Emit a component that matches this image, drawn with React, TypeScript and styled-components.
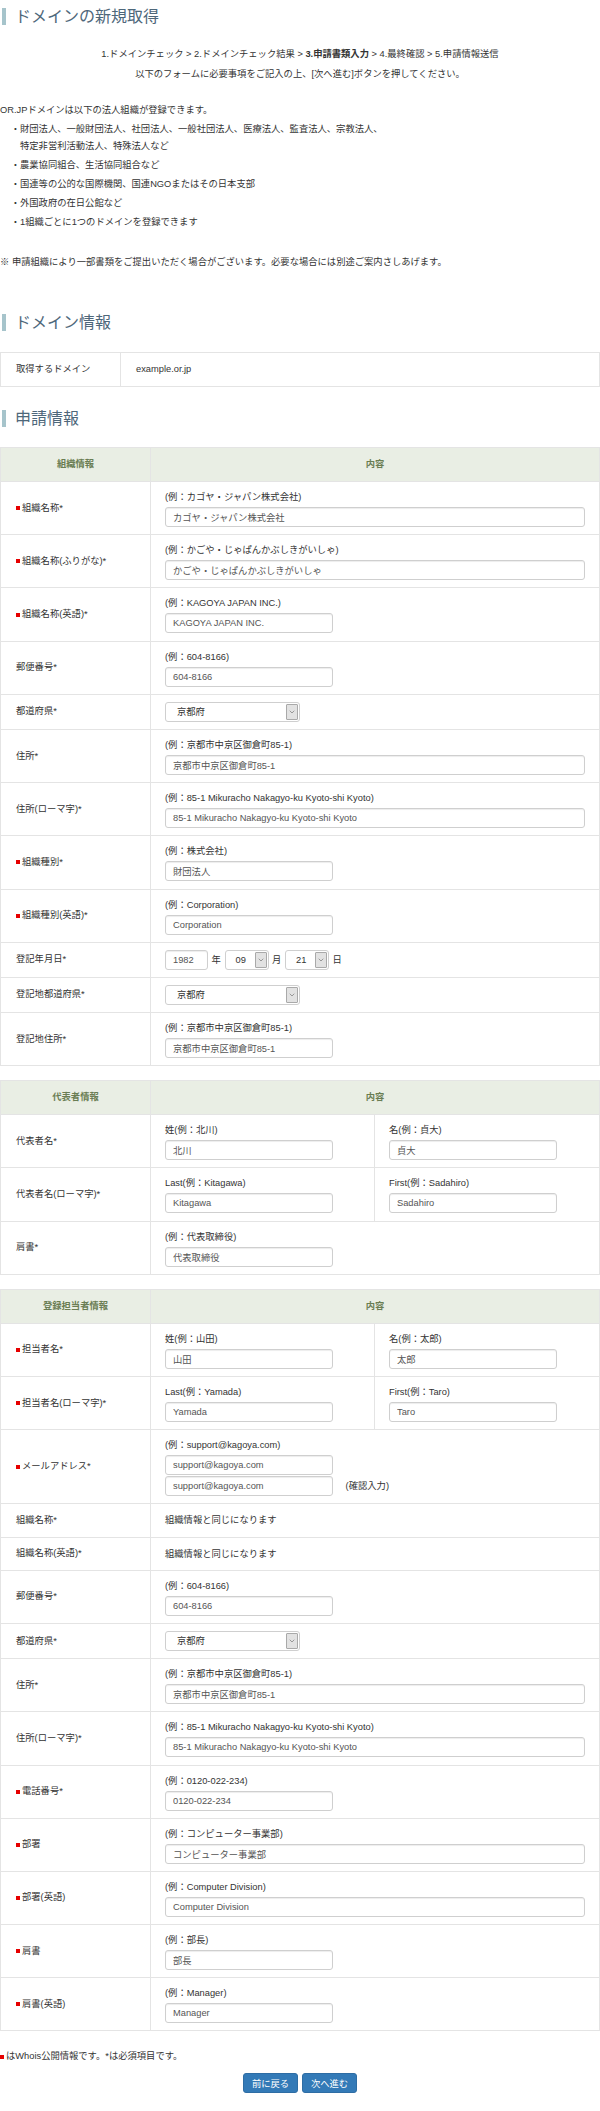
import React from 'react';
import styled, { createGlobalStyle } from 'styled-components';
import { ChevronDown } from 'lucide-react';

const GlobalStyle = createGlobalStyle`
  body {
    margin: 0;
    background: #fff;
    color: #333;
    font-family: "Liberation Sans", "Noto Sans CJK JP", sans-serif;
    font-size: 9.3px;
  }
`;

const Page = styled.div`
  width: 600px;
  padding-bottom: 20px;
`;

const Heading = styled.h2<{ $top: number }>`
  margin: ${p => p.$top}px 0 0 2px;
  padding-left: 9px;
  border-left: 4px solid #a6c4cb;
  font-size: 16px;
  font-weight: normal;
  line-height: 17px;
  color: #4e677a;
`;

const Steps = styled.div`
  margin-top: 19px;
  text-align: center;
  line-height: 20px;

  b {
    font-weight: bold;
  }
`;

const Intro = styled.p`
  margin: 18px 0 0;
  line-height: 17px;
`;

const OrgList = styled.ul`
  list-style: none;
  margin: 0;
  padding: 0 0 0 20px;
`;

const OrgItem = styled.li`
  margin-top: 2px;
  line-height: 17px;
  text-indent: -1em;
`;

const Note = styled.p`
  margin: 23px 0 0;
  line-height: 17px;
`;

const FormTable = styled.table<{ $top: number }>`
  width: 100%;
  margin-top: ${p => p.$top}px;
  border-collapse: collapse;
  table-layout: fixed;
  border: 1px solid #e4e4e4;
`;

const Col = styled.col<{ $width?: number }>`
  width: ${p => (p.$width ? `${p.$width}px` : 'auto')};
`;

const HeadCell = styled.th`
  padding: 8px;
  border: 1px solid #e4e4e4;
  background: #e9eee4;
  color: #6a7d53;
  font-weight: bold;
  line-height: 17px;
  text-align: center;
`;

const LabelCell = styled.td`
  padding: 7px 14px 7px 15px;
  border: 1px solid #e4e4e4;
  line-height: 17px;
  vertical-align: middle;
`;

const FieldCell = styled.td`
  padding: 7px 14px 7.2px;
  border: 1px solid #e4e4e4;
  line-height: 18px;
  vertical-align: middle;
`;

const PlainCell = styled.td`
  padding: 8px 15px;
  border: 1px solid #e4e4e4;
  line-height: 17px;
`;

const Mark = styled.span`
  display: inline-block;
  width: 4px;
  height: 4px;
  margin-right: 2px;
  background: #e60000;
  vertical-align: middle;
`;

const Hint = styled.div`
  line-height: 16px;
  margin-bottom: 2px;
`;

const TextInput = styled.input<{ $width: string }>`
  display: block;
  box-sizing: border-box;
  width: ${p => p.$width};
  height: 20px;
  margin: 0;
  padding: 0 7px;
  border: 1px solid #cfcfcf;
  border-radius: 3px;
  box-shadow: inset 0 1px 1px rgba(0, 0, 0, 0.075);
  background: #fff;
  color: #555;
  font: inherit;
  outline: none;
`;

const SelectBox = styled.div<{ $width: number }>`
  display: flex;
  align-items: stretch;
  box-sizing: border-box;
  width: ${p => p.$width}px;
  height: 20px;
  border: 1px solid #cfcfcf;
  border-radius: 3px;
  background: #fff;
  color: #333;
`;

const SelectText = styled.span<{ $pad: number }>`
  flex: 1;
  padding-left: ${p => p.$pad}px;
  line-height: 18px;
`;

const SelectArrow = styled.span`
  display: flex;
  align-items: center;
  justify-content: center;
  width: 10px;
  margin: 1px;
  border: 1px solid #a9a9a9;
  border-radius: 1px;
  background: #e2e2e2;
  color: #555;
`;

const InlineRow = styled.div`
  display: flex;
  align-items: center;
  gap: 3.6px;
`;

const Stack = styled.div`
  display: flex;
  flex-direction: column;
  gap: 1px;
`;

const Confirm = styled.span`
  margin-left: 9px;
`;

const Footnote = styled.p`
  margin: 17px 0 0;
  line-height: 17px;
`;

const Buttons = styled.div`
  display: flex;
  justify-content: center;
  gap: 4px;
  margin-top: 8px;
`;

const Button = styled.button`
  width: 55px;
  height: 20px;
  padding: 0;
  border: 1px solid #2e6da4;
  border-radius: 3px;
  background: #337ab7;
  color: #fff;
  font: inherit;
  cursor: pointer;
`;

const SHORT = '168px';

const Label = ({ text, marked }: { text: string; marked?: boolean }) => (
  <LabelCell>
    {marked && <Mark />}
    {text}
  </LabelCell>
);

const Select = ({ value, width = 135, pad = 11 }: { value: string; width?: number; pad?: number }) => (
  <SelectBox $width={width}>
    <SelectText $pad={pad}>{value}</SelectText>
    <SelectArrow>
      <ChevronDown size={8} strokeWidth={1.6} />
    </SelectArrow>
  </SelectBox>
);

type InputRowProps = { label: string; marked?: boolean; hint: string; value: string; wide?: boolean };

const InputRow = ({ label, marked, hint, value, wide }: InputRowProps) => (
  <tr>
    <Label text={label} marked={marked} />
    <FieldCell colSpan={2}>
      <Hint>{hint}</Hint>
      <TextInput $width={wide ? '100%' : SHORT} defaultValue={value} />
    </FieldCell>
  </tr>
);

const SelectRow = ({ label }: { label: string }) => (
  <tr>
    <Label text={label} />
    <FieldCell colSpan={2}>
      <Select value="京都府" />
    </FieldCell>
  </tr>
);

const TextRow = ({ label, text }: { label: string; text: string }) => (
  <tr>
    <Label text={label} />
    <FieldCell colSpan={2}>{text}</FieldCell>
  </tr>
);

type Half = { hint: string; value: string };

const PairRow = ({ label, marked, left, right }: { label: string; marked?: boolean; left: Half; right: Half }) => (
  <tr>
    <Label text={label} marked={marked} />
    <FieldCell>
      <Hint>{left.hint}</Hint>
      <TextInput $width={SHORT} defaultValue={left.value} />
    </FieldCell>
    <FieldCell>
      <Hint>{right.hint}</Hint>
      <TextInput $width={SHORT} defaultValue={right.value} />
    </FieldCell>
  </tr>
);

const Section = ({ title, top, children }: { title: string; top: number; children: React.ReactNode }) => (
  <FormTable $top={top}>
    <colgroup>
      <Col $width={150} />
      <Col $width={224} />
      <Col />
    </colgroup>
    <tbody>
      <tr>
        <HeadCell>{title}</HeadCell>
        <HeadCell colSpan={2}>内容</HeadCell>
      </tr>
      {children}
    </tbody>
  </FormTable>
);

const App = () => (
  <Page>
    <GlobalStyle />
    <Heading $top={8}>ドメインの新規取得</Heading>

    <Steps>
      1.ドメインチェック &gt; 2.ドメインチェック結果 &gt; <b>3.申請書類入力</b> &gt; 4.最終確認 &gt; 5.申請情報送信
      <br />
      以下のフォームに必要事項をご記入の上、[次へ進む]ボタンを押してください。
    </Steps>

    <Intro>OR.JPドメインは以下の法人組織が登録できます。</Intro>
    <OrgList>
      <OrgItem>
        ・財団法人、一般財団法人、社団法人、一般社団法人、医療法人、監査法人、宗教法人、
        <br />
        特定非営利活動法人、特殊法人など
      </OrgItem>
      <OrgItem>・農業協同組合、生活協同組合など</OrgItem>
      <OrgItem>・国連等の公的な国際機関、国連NGOまたはその日本支部</OrgItem>
      <OrgItem>・外国政府の在日公館など</OrgItem>
      <OrgItem>・1組織ごとに1つのドメインを登録できます</OrgItem>
    </OrgList>
    <Note>※ 申請組織により一部書類をご提出いただく場合がございます。必要な場合には別途ご案内さしあげます。</Note>

    <Heading $top={43}>ドメイン情報</Heading>
    <FormTable $top={21}>
      <colgroup>
        <Col $width={120} />
        <Col />
      </colgroup>
      <tbody>
        <tr>
          <PlainCell>取得するドメイン</PlainCell>
          <PlainCell>example.or.jp</PlainCell>
        </tr>
      </tbody>
    </FormTable>

    <Heading $top={23}>申請情報</Heading>
    <Section title="組織情報" top={20}>
      <InputRow label="組織名称*" marked hint="(例：カゴヤ・ジャパン株式会社)" value="カゴヤ・ジャパン株式会社" wide />
      <InputRow label="組織名称(ふりがな)*" marked hint="(例：かごや・じゃぱんかぶしきがいしゃ)" value="かごや・じゃぱんかぶしきがいしゃ" wide />
      <InputRow label="組織名称(英語)*" marked hint="(例：KAGOYA JAPAN INC.)" value="KAGOYA JAPAN INC." />
      <InputRow label="郵便番号*" hint="(例：604-8166)" value="604-8166" />
      <SelectRow label="都道府県*" />
      <InputRow label="住所*" hint="(例：京都市中京区御倉町85-1)" value="京都市中京区御倉町85-1" wide />
      <InputRow label="住所(ローマ字)*" hint="(例：85-1 Mikuracho Nakagyo-ku Kyoto-shi Kyoto)" value="85-1 Mikuracho Nakagyo-ku Kyoto-shi Kyoto" wide />
      <InputRow label="組織種別*" marked hint="(例：株式会社)" value="財団法人" />
      <InputRow label="組織種別(英語)*" marked hint="(例：Corporation)" value="Corporation" />
      <tr>
        <Label text="登記年月日*" />
        <FieldCell colSpan={2}>
          <InlineRow>
            <TextInput $width="43px" defaultValue="1982" />
            <span>年</span>
            <Select value="09" width={44} pad={10} />
            <span>月</span>
            <Select value="21" width={44} pad={10} />
            <span>日</span>
          </InlineRow>
        </FieldCell>
      </tr>
      <SelectRow label="登記地都道府県*" />
      <InputRow label="登記地住所*" hint="(例：京都市中京区御倉町85-1)" value="京都市中京区御倉町85-1" />
    </Section>

    <Section title="代表者情報" top={14}>
      <PairRow
        label="代表者名*"
        left={{ hint: '姓(例：北川)', value: '北川' }}
        right={{ hint: '名(例：貞大)', value: '貞大' }}
      />
      <PairRow
        label="代表者名(ローマ字)*"
        left={{ hint: 'Last(例：Kitagawa)', value: 'Kitagawa' }}
        right={{ hint: 'First(例：Sadahiro)', value: 'Sadahiro' }}
      />
      <InputRow label="肩書*" hint="(例：代表取締役)" value="代表取締役" />
    </Section>

    <Section title="登録担当者情報" top={14}>
      <PairRow
        label="担当者名*"
        marked
        left={{ hint: '姓(例：山田)', value: '山田' }}
        right={{ hint: '名(例：太郎)', value: '太郎' }}
      />
      <PairRow
        label="担当者名(ローマ字)*"
        marked
        left={{ hint: 'Last(例：Yamada)', value: 'Yamada' }}
        right={{ hint: 'First(例：Taro)', value: 'Taro' }}
      />
      <tr>
        <Label text="メールアドレス*" marked />
        <FieldCell colSpan={2}>
          <Hint>(例：support@kagoya.com)</Hint>
          <Stack>
            <TextInput $width={SHORT} defaultValue="support@kagoya.com" />
            <InlineRow>
              <TextInput $width={SHORT} defaultValue="support@kagoya.com" />
              <Confirm>(確認入力)</Confirm>
            </InlineRow>
          </Stack>
        </FieldCell>
      </tr>
      <TextRow label="組織名称*" text="組織情報と同じになります" />
      <TextRow label="組織名称(英語)*" text="組織情報と同じになります" />
      <InputRow label="郵便番号*" hint="(例：604-8166)" value="604-8166" />
      <SelectRow label="都道府県*" />
      <InputRow label="住所*" hint="(例：京都市中京区御倉町85-1)" value="京都市中京区御倉町85-1" wide />
      <InputRow label="住所(ローマ字)*" hint="(例：85-1 Mikuracho Nakagyo-ku Kyoto-shi Kyoto)" value="85-1 Mikuracho Nakagyo-ku Kyoto-shi Kyoto" wide />
      <InputRow label="電話番号*" marked hint="(例：0120-022-234)" value="0120-022-234" />
      <InputRow label="部署" marked hint="(例：コンピューター事業部)" value="コンピューター事業部" wide />
      <InputRow label="部署(英語)" marked hint="(例：Computer Division)" value="Computer Division" wide />
      <InputRow label="肩書" marked hint="(例：部長)" value="部長" />
      <InputRow label="肩書(英語)" marked hint="(例：Manager)" value="Manager" />
    </Section>

    <Footnote>
      <Mark />
      はWhois公開情報です。*は必須項目です。
    </Footnote>
    <Buttons>
      <Button type="button">前に戻る</Button>
      <Button type="button">次へ進む</Button>
    </Buttons>
  </Page>
);

export default App;
